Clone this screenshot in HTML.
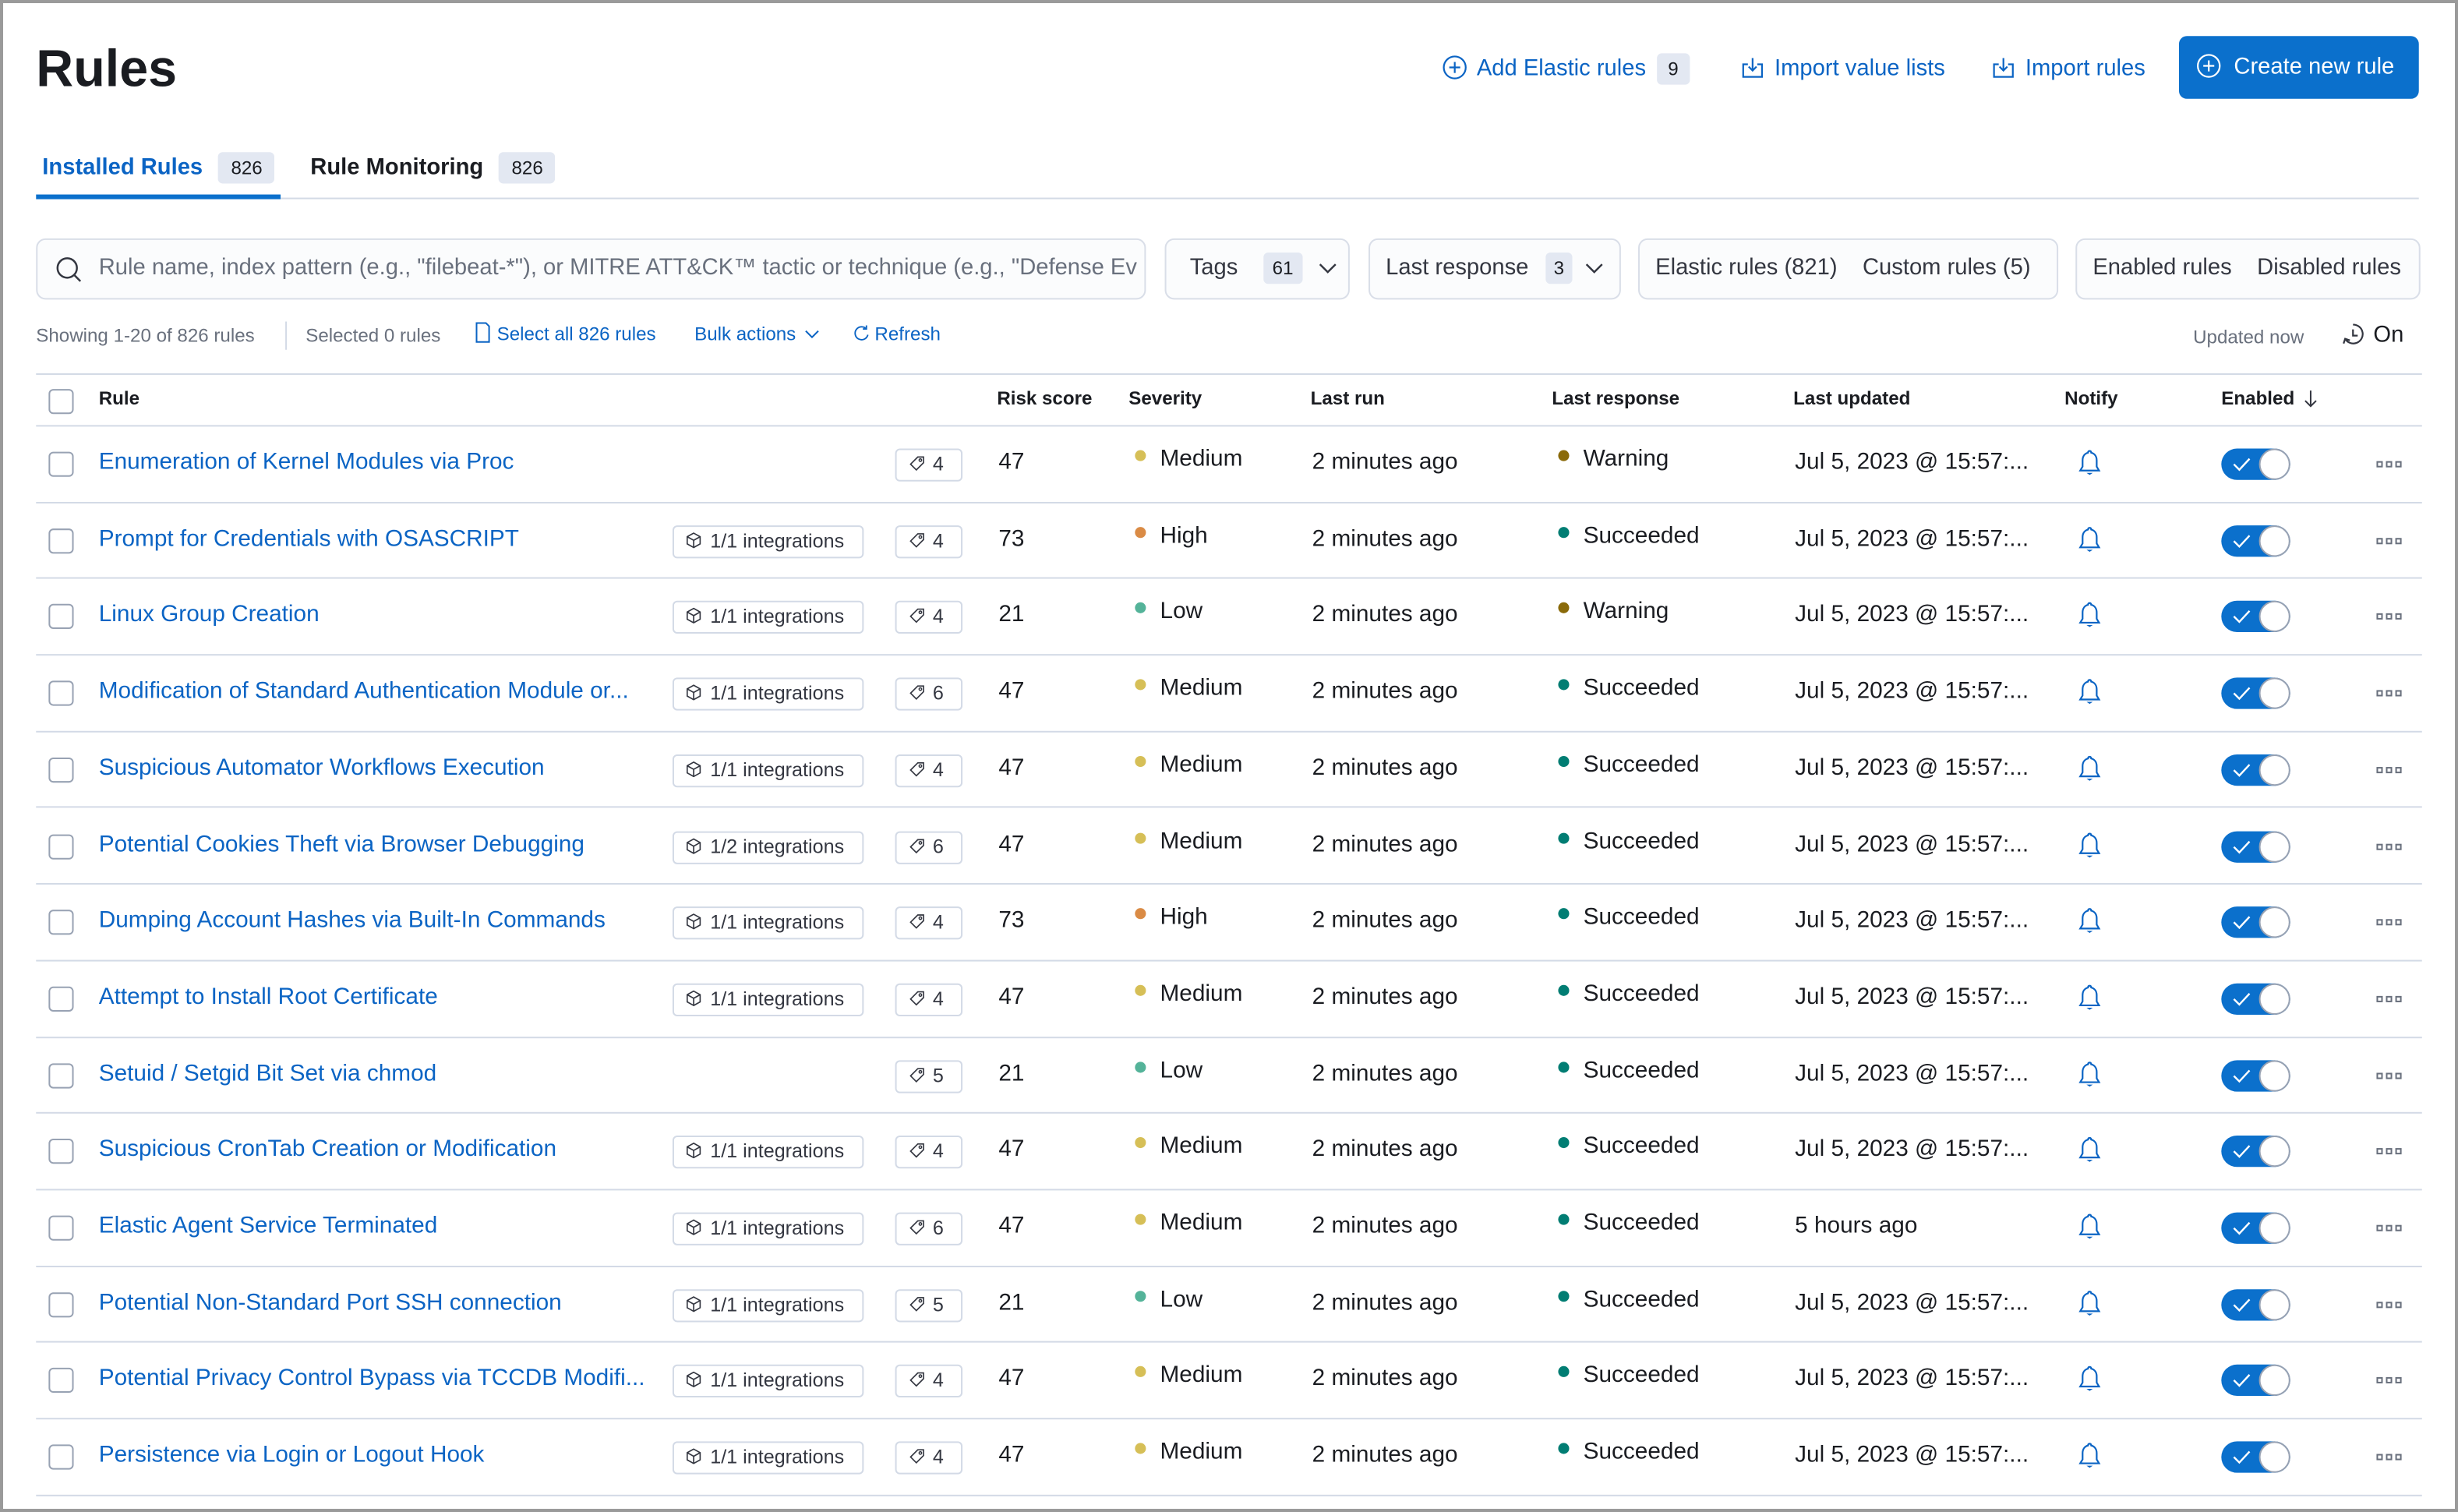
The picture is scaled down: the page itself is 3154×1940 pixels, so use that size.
<!DOCTYPE html>
<html><head><meta charset="utf-8"><style>
*{box-sizing:border-box;margin:0;padding:0}
html,body{width:3154px;height:1940px;overflow:hidden;background:#9a9a9a}
#w{position:absolute;left:0;top:0;width:1568px;height:964px;transform:scale(2.0115,2.0124);transform-origin:0 0;font-family:"Liberation Sans",Arial,sans-serif;color:#1a1c21}
#p{position:absolute;left:2px;top:2px;width:1564px;height:960px;background:#fff;overflow:hidden}
.a{position:absolute;white-space:nowrap}
.lnk{color:#0b64c4}
.badge{display:inline-block;background:#e3e8f2;border-radius:3px;padding:0 8px;font-size:12px;line-height:20px;color:#1a1c21;font-weight:normal}
.fb{position:absolute;top:150px;height:39px;border:1px solid #d9dee8;border-radius:6px;background:#fbfcfd;font-size:14.5px;line-height:37px;color:#343741}
.row{position:absolute;left:21px;width:1522px;height:48.7px;border-bottom:1px solid #d3dae6}
.row .a{line-height:48px;top:-1px;font-size:14.8px}
.cb{position:absolute;left:8px;top:16px;width:16px;height:16px;border:1px solid #98a2b3;border-radius:3px}
.pill{position:absolute;top:14px;height:21px;border:1px solid #d3dae6;border-radius:3px;font-size:12.5px;line-height:19px;padding-left:7px;color:#343741}
.dot{display:inline-block;width:7px;height:7px;border-radius:50%;margin-right:9px;vertical-align:3px}
.tg{position:absolute;left:1394px;top:14px;width:44px;height:20px;border-radius:10px;background:#0b70cc}
.tg:after{content:"";position:absolute;right:0;top:0;width:20px;height:20px;border-radius:50%;background:#fff;border:1.5px solid #98a2b3;box-sizing:border-box}
.tg svg{position:absolute;left:7px;top:5px}
.dots{position:absolute;left:1493px;top:22px;width:16px;height:4px;display:flex;gap:2px}
.dots i{width:4px;height:4px;border:1px solid #69707d}
</style></head><body><div id="w"><div id="p">
<div class="a" style="left:21px;top:22px;font-size:33px;font-weight:bold;line-height:40px">Rules</div>

<div class="a lnk" style="left:918px;top:31px;font-size:14.5px;line-height:22px">
<svg width="16" height="16" viewBox="0 0 16 16" style="vertical-align:-3px;margin-right:6px"><circle cx="8" cy="8" r="7" fill="none" stroke="#0b64c4" stroke-width="1.1"/><path d="M8 4.5v7M4.5 8h7" stroke="#0b64c4" stroke-width="1.1"/></svg>Add Elastic rules <span class="badge" style="margin-left:3px;padding:0 7px">9</span></div>
<div class="a lnk" style="left:1108px;top:31px;font-size:14.5px;line-height:22px"><svg width="16" height="16" viewBox="0 0 16 16" style="vertical-align:-3px;margin-right:6px"><path d="M5 6H2v8h12V6h-3M8 2v8M5.5 7.5L8 10l2.5-2.5" fill="none" stroke="#0b64c4" stroke-width="1.1"/></svg>Import value lists</div>
<div class="a lnk" style="left:1268px;top:31px;font-size:14.5px;line-height:22px"><svg width="16" height="16" viewBox="0 0 16 16" style="vertical-align:-3px;margin-right:6px"><path d="M5 6H2v8h12V6h-3M8 2v8M5.5 7.5L8 10l2.5-2.5" fill="none" stroke="#0b64c4" stroke-width="1.1"/></svg>Import rules</div>
<div class="a" style="left:1388px;top:21px;width:153px;height:40px;background:#0b70cc;border-radius:5px;color:#fff;font-size:14.5px;line-height:40px;padding-left:11px"><svg width="16" height="16" viewBox="0 0 16 16" style="vertical-align:-3px;margin-right:8px"><circle cx="8" cy="8" r="7" fill="none" stroke="#fff" stroke-width="1.1"/><path d="M8 4.5v7M4.5 8h7" stroke="#fff" stroke-width="1.1"/></svg>Create new rule</div>

<div class="a" style="left:25px;top:94px;font-size:14.5px;font-weight:bold;line-height:22px;color:#0b64c4">Installed Rules <span class="badge" style="margin-left:6px">826</span></div>
<div class="a" style="left:21px;top:122px;width:156px;height:3px;background:#0b70cc"></div>
<div class="a" style="left:196px;top:94px;font-size:14.5px;font-weight:bold;line-height:22px">Rule Monitoring <span class="badge" style="margin-left:6px">826</span></div>
<div class="a" style="left:177px;top:123.5px;width:1364px;height:1px;background:#d3dae6"></div>

<div class="fb" style="left:21px;width:708px;padding-left:39px;color:#69707d;overflow:hidden"><svg width="18" height="18" viewBox="0 0 16 16" style="position:absolute;left:11px;top:10px"><circle cx="7" cy="7" r="5.5" fill="none" stroke="#343741" stroke-width="1.1"/><path d="M11 11l3.5 3.5" stroke="#343741" stroke-width="1.1"/></svg>Rule name, index pattern (e.g., "filebeat-*"), or MITRE ATT&amp;CK™ tactic or technique (e.g., "Defense Ev</div>
<div class="fb" style="left:741px;width:118px;padding-left:15px">Tags <span class="badge" style="margin-left:12px;padding:0 6px">61</span><svg width="12" height="8" viewBox="0 0 12 8" style="margin-left:10px"><path d="M1 1.5l5 5 5-5" fill="none" stroke="#343741" stroke-width="1.2"/></svg></div>
<div class="fb" style="left:871px;width:161px;padding-left:10px">Last response <span class="badge" style="margin-left:7px;padding:0 5px">3</span><svg width="12" height="8" viewBox="0 0 12 8" style="margin-left:8px"><path d="M1 1.5l5 5 5-5" fill="none" stroke="#343741" stroke-width="1.2"/></svg></div>
<div class="fb" style="left:1043px;width:268px;padding-left:10px">Elastic rules (821) &nbsp;&nbsp;&nbsp;Custom rules (5)</div>
<div class="fb" style="left:1322px;width:220px;padding-left:10px">Enabled rules &nbsp;&nbsp;&nbsp;Disabled rules</div>

<div class="a" style="left:21px;top:202px;font-size:12px;line-height:20px;color:#69707d">Showing 1-20 of 826 rules</div>
<div class="a" style="left:180px;top:203px;width:1px;height:18px;background:#d3dae6"></div>
<div class="a" style="left:193px;top:202px;font-size:12px;line-height:20px;color:#69707d">Selected 0 rules</div>
<div class="a lnk" style="left:300px;top:201px;font-size:12px;line-height:20px"><svg width="12" height="14" viewBox="0 0 12 14" style="vertical-align:-2px;margin-right:3px"><path d="M2 1h6l2 2v10H2z" fill="none" stroke="#0b64c4"/></svg>Select all 826 rules</div>
<div class="a lnk" style="left:441px;top:201px;font-size:12px;line-height:20px">Bulk actions <svg width="10" height="7" viewBox="0 0 10 7" style="margin-left:2px"><path d="M1 1l4 4 4-4" fill="none" stroke="#0b64c4"/></svg></div>
<div class="a lnk" style="left:542px;top:201px;font-size:12px;line-height:20px"><svg width="11" height="11" viewBox="0 0 12 12" style="vertical-align:-1px;margin-right:3px"><path d="M9.5 3A4.5 4.5 0 1 0 10.5 7M9.5 0.5V3H7" fill="none" stroke="#0b64c4"/></svg>Refresh</div>
<div class="a" style="left:1397px;top:203px;font-size:12px;line-height:20px;color:#69707d">Updated now</div>
<div class="a" style="left:1490px;top:201px;font-size:14.5px;line-height:22px"><svg width="16" height="16" viewBox="0 0 16 16" style="vertical-align:-3px;margin-right:6px"><path d="M9 2a6 6 0 1 1-5 9M3 14l1-3 3 1" fill="none" stroke="#343741" stroke-width="1.1"/><path d="M9 5v4h3" fill="none" stroke="#343741" stroke-width="1.1"/></svg>On</div>

<div class="a" style="left:21px;top:236px;width:1522px;height:1px;background:#d3dae6"></div>
<div class="row" style="top:237px;height:33px">
<div class="cb" style="top:9px"></div>
<div class="a" style="left:40px;line-height:33px;font-size:12px;font-weight:bold">Rule</div>
<div class="a" style="left:613px;line-height:33px;font-size:12px;font-weight:bold">Risk score</div>
<div class="a" style="left:697px;line-height:33px;font-size:12px;font-weight:bold">Severity</div>
<div class="a" style="left:813px;line-height:33px;font-size:12px;font-weight:bold">Last run</div>
<div class="a" style="left:967px;line-height:33px;font-size:12px;font-weight:bold">Last response</div>
<div class="a" style="left:1121px;line-height:33px;font-size:12px;font-weight:bold">Last updated</div>
<div class="a" style="left:1294px;line-height:33px;font-size:12px;font-weight:bold">Notify</div>
<div class="a" style="left:1394px;line-height:33px;font-size:12px;font-weight:bold">Enabled <svg width="10" height="12" viewBox="0 0 10 12" style="vertical-align:-2px;margin-left:2px"><path d="M5 1v10M1.5 7.5L5 11l3.5-3.5" fill="none" stroke="#343741"/></svg></div>
</div>

<div id="rows"></div>
</div></div>
<script>
var R=[
["Enumeration of Kernel Modules via Proc","",4,47,"M","W","Jul 5, 2023 @ 15:57:..."],
["Prompt for Credentials with OSASCRIPT","1/1",4,73,"H","S",""],
["Linux Group Creation","1/1",4,21,"L","W",""],
["Modification of Standard Authentication Module or...","1/1",6,47,"M","S",""],
["Suspicious Automator Workflows Execution","1/1",4,47,"M","S",""],
["Potential Cookies Theft via Browser Debugging","1/2",6,47,"M","S",""],
["Dumping Account Hashes via Built-In Commands","1/1",4,73,"H","S",""],
["Attempt to Install Root Certificate","1/1",4,47,"M","S",""],
["Setuid / Setgid Bit Set via chmod","",5,21,"L","S",""],
["Suspicious CronTab Creation or Modification","1/1",4,47,"M","S",""],
["Elastic Agent Service Terminated","1/1",6,47,"M","S","5 hours ago"],
["Potential Non-Standard Port SSH connection","1/1",5,21,"L","S",""],
["Potential Privacy Control Bypass via TCCDB Modifi...","1/1",4,47,"M","S",""],
["Persistence via Login or Logout Hook","1/1",4,47,"M","S",""]];
var sev={M:["Medium","#d6bf57"],H:["High","#da8b45"],L:["Low","#54b399"]};
var resp={W:["Warning","#8a6a0a"],S:["Succeeded","#017d73"]};
var h="";
R.forEach(function(r,i){
var t=270+i*48.7;
h+='<div class="row" style="top:'+t+'px"><div class="cb"></div>';
h+='<div class="a lnk" style="left:40px">'+r[0]+'</div>';
if(r[1])h+='<div class="pill" style="left:406px;width:122px"><svg width="11" height="11" viewBox="0 0 12 12" style="vertical-align:-1px;margin-right:5px"><path d="M6 1l4.5 2.5v5L6 11 1.5 8.5v-5zM1.5 3.5L6 6l4.5-2.5M6 6v5" fill="none" stroke="#343741" stroke-width=".9"/></svg>'+r[1]+' integrations</div>';
h+='<div class="pill" style="left:548px;width:43px"><svg width="12" height="11" viewBox="0 0 12 12" style="vertical-align:-1px;margin-right:4px"><path d="M6.5 1.5h4v4l-5 5-4-4z" fill="none" stroke="#343741" stroke-width=".9"/><circle cx="8.3" cy="3.7" r=".9" fill="none" stroke="#343741" stroke-width=".8"/></svg>'+r[2]+'</div>';
h+='<div class="a" style="left:614px">'+r[3]+'</div>';
var s=sev[r[4]];h+='<div class="a" style="left:701px;top:-3px"><span class="dot" style="background:'+s[1]+'"></span>'+s[0]+'</div>';
h+='<div class="a" style="left:814px">2 minutes ago</div>';
var q=resp[r[5]];h+='<div class="a" style="left:971px;top:-3px"><span class="dot" style="background:'+q[1]+'"></span>'+q[0]+'</div>';
h+='<div class="a" style="left:1122px">'+(r[6]||"Jul 5, 2023 @ 15:57:...")+'</div>';
h+='<svg class="a" style="left:1302px;top:14px" width="16" height="18" viewBox="0 0 16 18"><path d="M8 1.5c-.8 0-1 .6-1 1.1C4.8 3.2 3.5 5 3.5 7.5v4L2 14h12l-1.5-2.5v-4C12.5 5 11.2 3.2 9 2.6c0-.5-.2-1.1-1-1.1z" fill="none" stroke="#0b64c4" stroke-width="1.1"/><path d="M6 15.5h4L8 16.8z" fill="#0b64c4"/></svg>';
h+='<div class="tg"><svg width="12" height="10" viewBox="0 0 12 10"><path d="M1 5l3.5 3.5L11 1.5" fill="none" stroke="#fff" stroke-width="1.2"/></svg></div>';
h+='<div class="dots"><i></i><i></i><i></i></div></div>';
});
document.getElementById("rows").outerHTML=h;
</script>
</body></html>
